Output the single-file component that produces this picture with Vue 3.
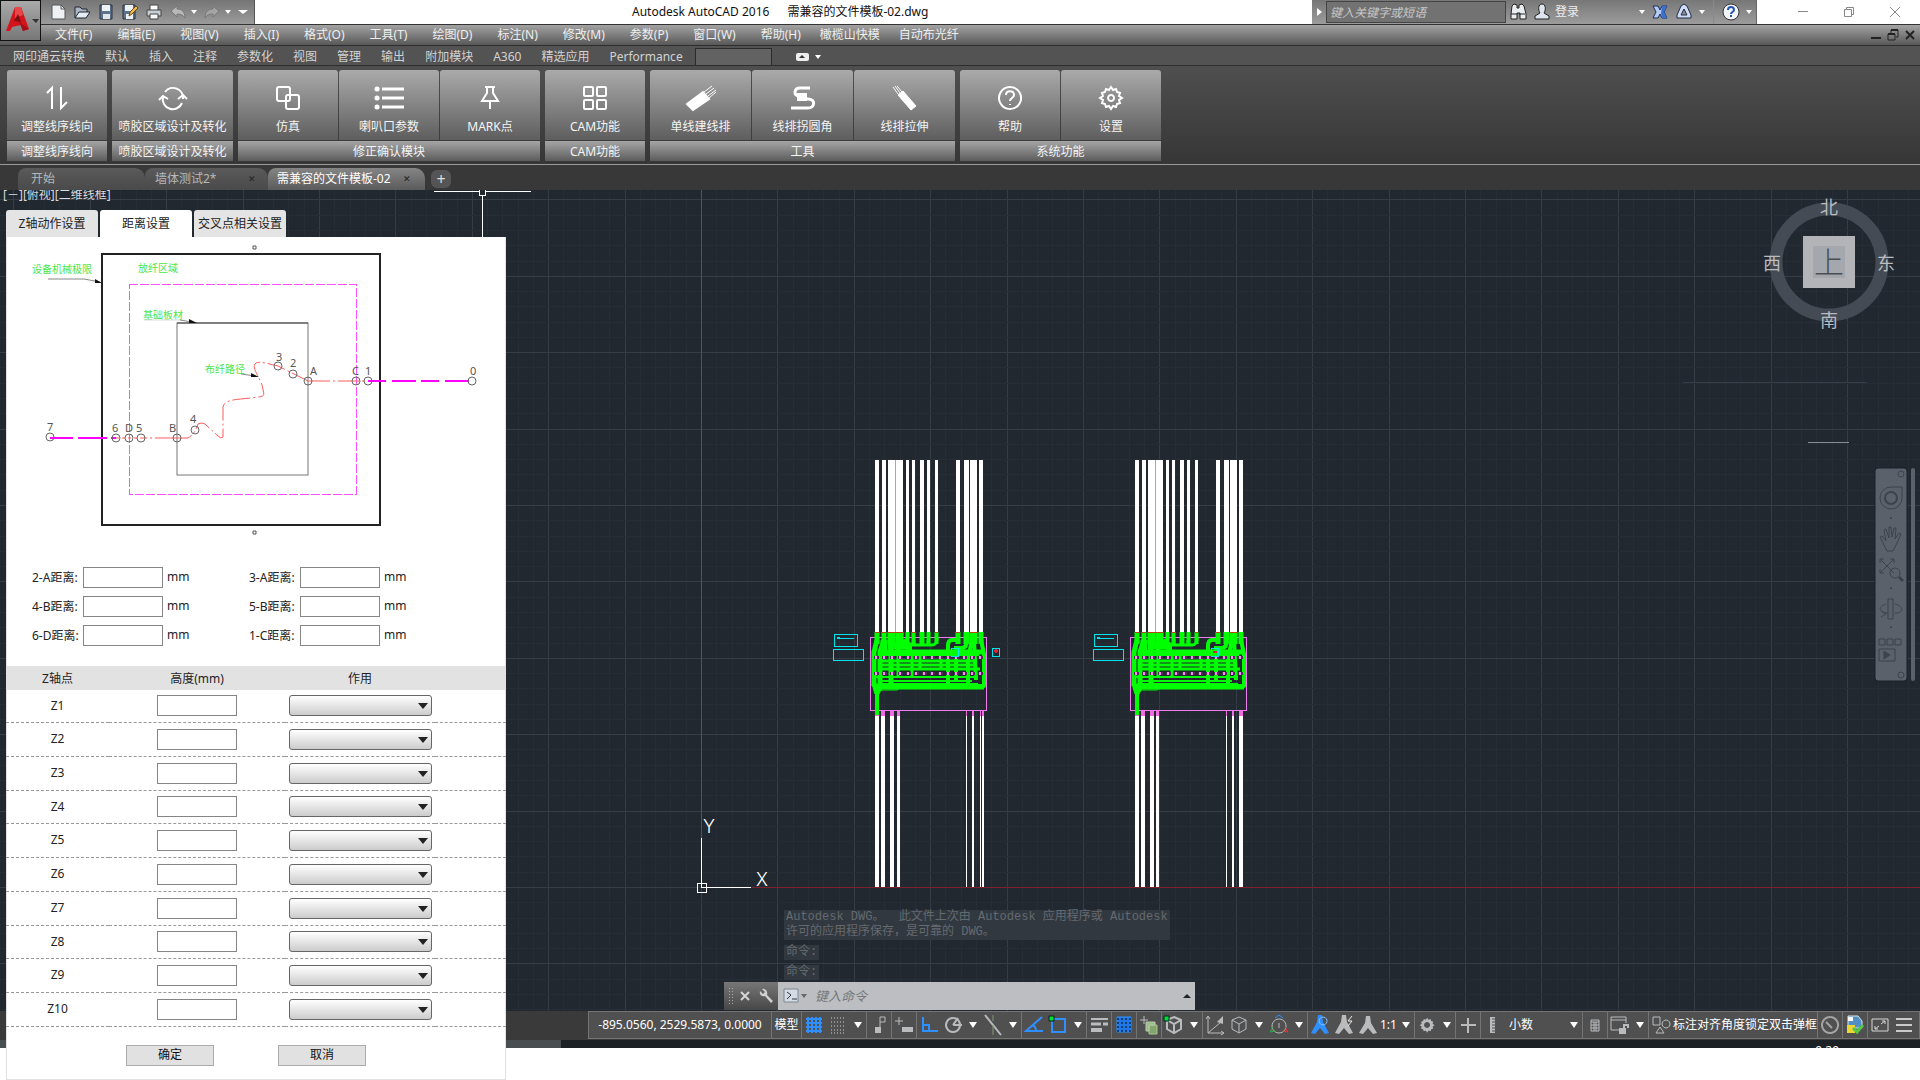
<script setup>
import { ref } from 'vue'

const quick = [
  { n: '新建', p: [{ d: 'M2 1h9l4 4v10H2z', f: '#eef1f4', s: '#555' }, { d: 'M11 1v4h4', f: 'none', s: '#555' }] },
  { n: '打开', p: [{ d: 'M1 14V3h5l2 2h5v3', f: '#aab6c6', s: '#20262e' }, { d: 'M1 14l4-6h11l-4 6z', f: '#e6edf5', s: '#20262e' }] },
  { n: '保存', p: [{ d: 'M2 1h12v14H2z', f: '#5d728c', s: '#26323f' }, { d: 'M4 1h8v6H4z', f: '#eef1f4', s: 'none' }, { d: 'M5 10h7v5H5z', f: '#dfe5ea', s: 'none' }] },
  { n: '另存为', p: [{ d: 'M1 1h12v14H1z', f: '#5d728c', s: '#26323f' }, { d: 'M3 1h8v6H3zM4 10h7v5H4z', f: '#eef1f4', s: 'none' }, { d: 'M7 12l1-4 6-6 2 2-6 6z', f: '#f0b94a', s: '#6b4a17' }] },
  { n: '打印', p: [{ d: 'M4 1h8v6H4z', f: '#fff', s: '#444' }, { d: 'M1 6h14v6H1z', f: '#c9ced3', s: '#444' }, { d: 'M4 10h8v5H4z', f: '#f7f7f7', s: '#444' }] },
  { n: '放弃', w: 1, p: [{ d: 'M1 7l6-5v3c5 0 8 3 8 9-2-3-4-4-8-4v3z', f: '#b9b9b9', s: '#777' }] },
  { n: '重做', w: 1, p: [{ d: 'M15 7L9 2v3c-5 0-8 3-8 9 2-3 4-4 8-4v3z', f: '#a4a4a4', s: '#777' }] }
]

const menus = ['文件(F)', '编辑(E)', '视图(V)', '插入(I)', '格式(O)', '工具(T)', '绘图(D)', '标注(N)', '修改(M)', '参数(P)', '窗口(W)', '帮助(H)', '橄榄山快模', '自动布光纤']
const ribbonTabs = ['网印通云转换', '默认', '插入', '注释', '参数化', '视图', '管理', '输出', '附加模块', 'A360', '精选应用', 'Performance']

const gear = 'M12 1l2 3 3-1 1 3 3 1-1 3 3 2-3 2 1 3-3 1-1 3-3-1-2 3-2-3-3 1-1-3-3-1 1-3-3-2 3-2-1-3 3-1 1-3 3 1z'
const panels = [
  { title: '调整线序线向', tools: [{ n: '调整线序线向', p: [{ d: 'M2 7l5-5v21M16 1v21l6-6' }] }] },
  { title: '喷胶区域设计及转化', wide: true, tools: [{ n: '喷胶区域设计及转化', p: [{ d: 'M4 6a10 10 0 0 1 18 7M21 17A10 10 0 0 1 2 11' }, { d: 'M17 13l5-4 4 4M-2 14l4-4 5 3' }] }] },
  { title: '修正确认模块', tools: [
    { n: '仿真', p: [{ d: 'M3 1h9a2 2 0 0 1 2 2v10a2 2 0 0 1-2 2H3a2 2 0 0 1-2-2V3a2 2 0 0 1 2-2zM12 9h9a2 2 0 0 1 2 2v10a2 2 0 0 1-2 2h-9a2 2 0 0 1-2-2V11a2 2 0 0 1 2-2z' }] },
    { n: '喇叭口参数', x: '0 0 30 24', p: [{ d: 'M3 3h0.1M3 12h0.1M3 21h0.1', w: 5 }, { d: 'M8 3h22M8 12h22M8 21h22', w: 3 }] },
    { n: 'MARK点', p: [{ d: 'M7 1h10M9 1v6l-5 8h16l-5-8V1M12 15v8' }] }] },
  { title: 'CAM功能', tools: [{ n: 'CAM功能', p: [{ d: 'M2 1h7q1 0 1 1v7q0 1-1 1H2q-1 0-1-1V2q0-1 1-1zM15 1h7q1 0 1 1v7q0 1-1 1h-7q-1 0-1-1V2q0-1 1-1zM2 14h7q1 0 1 1v7q0 1-1 1H2q-1 0-1-1v-7q0-1 1-1zM15 14h7q1 0 1 1v7q0 1-1 1h-7q-1 0-1-1v-7q0-1 1-1z' }] }] },
  { title: '工具', tools: [
    { n: '单线建线排', p: [{ d: 'M-2 18L14 6l6 7L4 24z', f: '#fff' }, { d: 'M15 6l8-6M17 8l8-6M19 10l8-6M20 12l7-6', w: 1 }] },
    { n: '线排拐圆角', p: [{ d: 'M19 2H9C3 2 2 10 8 10M14 13h3c8 0 7 9 0 9H0', w: 3 }, { d: 'M7 8h8v6H7z', f: '#fff' }] },
    { n: '线排拉伸', p: [{ d: 'M5 9l5-4 13 15-5 4z', f: '#fff', w: 1 }, { d: 'M5 8L0 1M7 7L2 0M9 6L4 0', w: 1 }] }] },
  { title: '系统功能', tools: [
    { n: '帮助', p: [{ d: 'M12 1a11 11 0 1 0 .1 0zM8 9c0-5 8-5 8 0 0 3-4 3-4 6M12 18v1' }] },
    { n: '设置', p: [{ d: gear }, { d: 'M12 9a3 3 0 1 0 .1 0z' }] }] }
]

const docs = [{ n: '开始' }, { n: '墙体测试2*', x: 1 }, { n: '需兼容的文件模板-02', x: 1, on: 1 }]

const range = (n) => Array.from({ length: n }, (_, i) => i)
const gridX = range(130).map((i) => ({ at: Math.round(701 + (i - 46) * 15.28), major: (i - 46) % 5 === 0 }))
const gridY = range(56).map((i) => ({ at: Math.round(887 + (i - 46) * 15.28), major: (i - 46) % 5 === 0 }))

const topBars = [[875, 4], [882, 4], [888, 7], [896, 7], [906, 3], [912, 3], [920, 4], [927, 3], [935, 3], [956, 4], [964, 5], [970, 7], [979, 4]]
const boards = [
  { dx: 0, marks: [951, 992], low: [[875, 4], [881, 4], [890, 4], [897, 3], [966, 1], [972, 2], [980, 1], [982, 2]] },
  { dx: 260, marks: [951], low: [[875, 4], [881, 4], [890, 4], [896, 3], [966, 1], [972, 2], [979, 4]] }
]
const pads = range(14).map((i) => 877 + i * 8)

const distances = [['2-A距离:', '3-A距离:'], ['4-B距离:', '5-B距离:'], ['6-D距离:', '1-C距离:']]
const dialogTabs = ['Z轴动作设置', '距离设置', '交叉点相关设置']
const activeTab = ref(1)
const nodes = [[472, 381, '0', 470, 375], [368, 381, '1', 365, 375], [356, 381, 'C', 352, 375], [308, 381, 'A', 310, 375], [293, 374, '2', 290, 367], [278, 366, '3', 276, 361], [195, 430, '4', 190, 423], [177, 438, 'B', 169, 432], [141, 438, '5', 136, 432], [129, 438, 'D', 125, 432], [116, 438, '6', 112, 432], [50, 437, '7', 47, 431]]

const G = '#b9bbbd'
const B = '#2f8fff'
const star = 'M10 2h4l1 7 6 11-4 1-5-6-5 6-4-1 6-11z'
const cube = 'M12 4l7 3v9l-7 4-7-4V7zM5 7l7 4 7-4M12 11v9'
const I = {
  grid: [{ d: 'M6 4v16M10 4v16M14 4v16M18 4v16M4 6h16M4 10h16M4 14h16M4 18h16', s: B, w: 2 }],
  dots: [{ d: 'M5 5h15M5 9h15M5 13h15M5 17h15M5 20h15', s: '#d0d0d0', w: 1, a: '1 2' }],
  infer: [{ d: 'M13 4h5v5h-5zM13 9v6', s: G, w: 1 }, { d: 'M8 14h6v6H8z', f: G }],
  dyn: [{ d: 'M3 8h8M7 4v8', s: G, w: 1 }, { d: 'M10 14h11v5H10z', f: G }],
  ortho: [{ d: 'M6 4v14h15M6 12h6v6', s: B, w: 2 }],
  polar: [{ d: 'M12 5a7 7 0 1 0 .1 0M12 12h9M12 12l5-7', s: G, w: 2 }],
  iso: [{ d: 'M4 2l16 20', s: G, w: 2 }, { d: 'M12 12v10M12 2v6', s: '#7f9a70', w: 1 }],
  track: [{ d: 'M20 4L4 18h17M10 12c3 1 4 3 4 6', s: B, w: 2 }],
  snap: [{ d: 'M6 6h13v13H6z', s: B, w: 2 }, { d: 'M3 3h5v5H3z', f: '#0d3', s: '#022', w: 1 }],
  lw: [{ d: 'M4 6h17', s: G, w: 2 }, { d: 'M4 11h10M16 11h5', s: G, w: 3 }, { d: 'M4 17h11', s: G, w: 4 }],
  trans: [{ d: 'M5 4h14v15H5z', f: '#1e78e6', s: B, w: 1 }, { d: 'M5 6h14M5 10h14M5 14h14M5 18h14', s: '#123e75', w: 2, a: '2 2' }],
  cycle: [{ d: 'M3 7h8M7 3v8', s: G, w: 1 }, { d: 'M12 12h8v9h-8z', f: '#83a66d', s: '#a5c38f', w: 1 }, { d: 'M9 9h9v3h-6v6H9z', f: '#9bbd85', s: '#b8c9ae', w: 1 }],
  osnap3: [{ d: cube, s: G, w: 2 }, { d: 'M2 3h5v5H2z', f: '#0d3', s: '#022', w: 1 }],
  ucs: [{ d: 'M5 4v16h16M5 20L18 9M3 6l2-3 2 3M18 18l3 2-3 2', s: G, w: 1 }, { d: 'M14 9l6-6v8z', f: G }],
  filter: [{ d: cube, s: G, w: 1 }],
  gizmo: [{ d: 'M12 6a7 7 0 1 0 .1 0M12 10v5', s: G, w: 1 }, { d: 'M8 5l4-3 4 3', s: B, w: 1 }, { d: 'M18 14l3 5-5-1', s: '#e33', w: 1 }, { d: 'M6 14l-3 5 5-1', s: '#3a4', w: 1 }],
  ann: [{ d: star, f: B }, { d: 'M15 4a4 4 0 1 0 .1 0', s: '#80bfff', w: 1 }],
  ann2: [{ d: star, f: G }, { d: 'M20 3l-4 5h4l-4 5', s: '#eee', w: 1 }],
  ann3: [{ d: 'M10 3h4l1 7 6 10-4 1-5-6-5 6-4-1 6-10z', f: G }],
  gear: [{ d: gear, f: G, t: 'translate(4 4) scale(.68)' }, { d: 'M12 9a3 3 0 1 0 .1 0z', f: '#505050' }],
  plus: [{ d: 'M12 5v15M5 12h15', s: G, w: 2 }],
  rule: [{ d: 'M9 4h5v16H9z', f: G }, { d: 'M11 6h3M11 9h3M11 12h3M11 15h3M11 18h3', s: '#505050', w: 1 }],
  calc: [{ d: 'M8 7h8v11H8zM8 9h8M11 9v9M13 9v9M8 12h8M8 15h8', s: G, w: 1 }],
  lock: [{ d: 'M11 17H3V4h15v6M3 7h15', s: G, w: 1 }, { d: 'M11 15h7v6h-7z', f: G }, { d: 'M16 15v-3h4v3', s: G, w: 2 }],
  shapes: [{ d: 'M4 4h7v8H4zM17 7a4 4 0 1 0 .1 0M11 14l4 6H7z', s: G, w: 1 }],
  gauge: [{ d: 'M12 4a8 8 0 1 0 .1 0M8 9l6 6', s: '#a4a4a4', w: 2 }],
  colour: [{ d: 'M5 3h10l4 5v7H5z', f: '#4f8fc6', s: '#dbe7ef', w: 1 }, { d: 'M4 12h8v8H4z', f: '#efd534' }, { d: 'M10 15l4 4 6-7', s: '#55c544', w: 3 }, { d: 'M5 4h5v4H5z', f: '#fff' }],
  full: [{ d: 'M4 6h16v12H4zM13 11l4-3M17 11V8h-3M11 13l-4 3M7 13v3h3', s: '#d6d6d6', w: 1 }],
  more: [{ d: 'M4 6h16M4 12h16M4 18h16', s: '#c9c9c9', w: 2 }]
}
const statusA = [['grid', 'dots', '▾'], ['infer'], ['dyn'], ['ortho', 'polar', '▾', 'iso', '▾'], ['track', 'snap', '▾'], ['lw'], ['trans'], ['cycle'], ['osnap3', '▾'], ['ucs', 'filter', '▾', 'gizmo', '▾'], ['ann', 'ann2', 'ann3', '1:1', '▾'], ['gear', '▾'], ['plus']]
const statusB = [['calc'], ['lock', '▾'], ['shapes', '标注对齐角度锁定双击弹框'], ['gauge'], ['colour'], ['full', 'more']]
</script>

<template>
  <div class="app">
    <header class="title">
      <button class="logo" aria-label="应用程序菜单">
        <svg width="40" height="40" viewBox="0 0 40 40"><path d="M5 30L14 6h6l8 22-6 2-2-6-9 2-2 4z" fill="#d3151b" /><path d="M14 6h6l2 8-8 3z" fill="#e8474a" /><path d="M13 20l4-7 3 8z" fill="#7a0d10" /><path d="M14 17l8 7 6 4-6 2-3-7z" fill="#a50f14" /><path d="M31 18h7l-3 4z" fill="#333" /></svg>
      </button>
      <div class="quick">
        <template v-for="q in quick" :key="q.n">
          <button class="qbtn" :aria-label="q.n"><svg width="16" height="16" viewBox="0 0 16 16"><path v-for="(p, i) in q.p" :key="i" :d="p.d" :fill="p.f" :stroke="p.s" /></svg></button>
          <i v-if="q.w" class="caret gap"></i>
        </template>
        <i class="caret over"></i>
      </div>
      <h1><span>Autodesk AutoCAD 2016</span><span>需兼容的文件模板-02.dwg</span></h1>
      <div class="search">
        <button class="play" aria-label="展开"><i></i></button>
        <input type="text" placeholder="键入关键字或短语" aria-label="搜索" />
        <button class="sbtn" aria-label="查找"><svg width="18" height="18" viewBox="0 0 18 18"><path d="M3 3l2-2 3 1v3h2V2l3-1 2 2 2 8v5h-6v-6H8v6H2v-5z" fill="#e9edf1" stroke="#222" /><path d="M2 11h6M10 11h6" stroke="#222" /></svg></button>
        <button class="sbtn login"><svg width="18" height="18" viewBox="0 0 18 18"><path d="M9 1c4 0 4 6 2 9l5 3v3H2v-3l5-3C5 7 5 1 9 1z" fill="#dfe5ee" stroke="#222" /></svg>登录</button>
        <i class="caret push"></i>
        <button class="sbtn" aria-label="Exchange"><svg width="18" height="18" viewBox="0 0 18 18"><path d="M2 3h5l2 4 2-4h5l-3 6 3 6h-5l-2-4-2 4H2l3-6z" fill="#b5cdf3" stroke="#1b2f5c" /><path d="M11 3h5l-3 6 3 6h-5l-1-5z" fill="#3a6fd0" /></svg></button>
        <button class="sbtn" aria-label="A360"><svg width="18" height="18" viewBox="0 0 18 18"><path d="M9 1l3 2 4 9v3H2v-3l4-9zM9 6l-3 6h6z" fill="#cfdcf3" stroke="#1f2d48" fill-rule="evenodd" /></svg></button>
        <i class="caret"></i><i class="bar"></i>
        <button class="sbtn" aria-label="帮助"><svg width="18" height="18" viewBox="0 0 18 18"><circle cx="9" cy="9" r="8" fill="#f2f5fa" stroke="#333" /><path d="M6 7c0-4 6-4 6 0 0 2-3 2-3 4M9 12v2" fill="none" stroke="#2455b0" stroke-width="2" /></svg></button>
        <i class="caret"></i>
      </div>
      <div class="win">
        <button aria-label="最小化"><svg width="12" height="12"><path d="M1 5.500h10" stroke="#888" /></svg></button>
        <button aria-label="还原"><svg width="12" height="12"><path d="M1.500 3.500h7v7h-7zM3.500 3V1.500h7v7H9" stroke="#888" fill="none" /></svg></button>
        <button aria-label="关闭"><svg width="12" height="12"><path d="M1 1l10 10M11 1L1 11" stroke="#888" /></svg></button>
      </div>
    </header>

    <nav class="menu">
      <a v-for="m in menus" :key="m" href="#" :class="{ plug: m.length === 5 && m[2] !== '(' }">{{ m }}</a>
      <div class="docwin">
        <button aria-label="最小化文档"><svg width="12" height="12"><path d="M1 9h10" stroke="#222" stroke-width="2" /></svg></button>
        <button aria-label="还原文档"><svg width="12" height="12"><path d="M1 5h7v6H1zM4 4V1h7v7H9" stroke="#222" stroke-width="1" fill="none" /><path d="M1 5h7M4 1h7" stroke="#222" stroke-width="2" /></svg></button>
        <button aria-label="关闭文档"><svg width="12" height="12"><path d="M2 2l8 8M10 2l-8 8" stroke="#222" stroke-width="2" /></svg></button>
      </div>
    </nav>

    <nav class="rtabs">
      <a v-for="t in ribbonTabs" :key="t" href="#">{{ t }}</a>
      <button class="blank" aria-label="当前选项卡"></button>
      <button class="fold" aria-label="最小化功能区"><i></i></button><i class="caret"></i>
    </nav>

    <section class="ribbon">
      <div v-for="p in panels" :key="p.title" class="panel">
        <div class="tools">
          <button v-for="t in p.tools" :key="t.n" class="tool" :class="{ wide: p.wide }">
            <svg :width="t.x ? 30 : 24" height="24" :viewBox="t.x || '0 0 24 24'" overflow="visible"><path v-for="(q, i) in t.p" :key="i" :d="q.d" :fill="q.f || 'none'" stroke="#fff" :stroke-width="q.w || 2" :stroke-linecap="q.w === 5 ? 'round' : 'butt'" /></svg>
            <span>{{ t.n }}</span>
          </button>
        </div>
        <div class="ptitle">{{ p.title }}</div>
      </div>
    </section>

    <div class="docs">
      <div v-for="d in docs" :key="d.n" class="doc" :class="{ on: d.on, mid: d.x && !d.on }">
        <span>{{ d.n }}</span><button v-if="d.x" aria-label="关闭标签">✕</button>
      </div>
      <button class="add" aria-label="新建标签">+</button>
    </div>

    <main class="canvas">
      <svg class="draw" width="100%" height="100%" font-family="'Noto Sans','Noto Sans CJK SC',sans-serif">
        <g transform="translate(0 -190)" shape-rendering="crispEdges">
          <path v-for="g in gridX" :key="'x' + g.at" :d="`M${g.at} 190V1400`" :stroke="g.major ? '#363d47' : '#262d36'" />
          <path v-for="g in gridY" :key="'y' + g.at" :d="`M0 ${g.at}H4000`" :stroke="g.major ? '#363d47' : '#262d36'" />
          <path d="M1683 382h184" stroke="#363d47" /><path d="M1808 442h41" stroke="#8b8f95" />
          <path d="M701 190V838" stroke="#1f7532" />
          <path d="M751 887H4000" stroke="#7d1f2c" />
          <g v-for="b in boards" :key="b.dx" :transform="`translate(${b.dx} 0)`">
            <rect x="888" y="460" width="15" height="172" fill="#aaa" />
            <rect v-for="r in topBars" :key="r[0]" :x="r[0]" y="460" :width="r[1]" height="173" fill="#fff" />
            <rect v-for="r in b.low" :key="r[0]" :x="r[0]" y="714" :width="r[1]" height="173" fill="#fff" />
            <rect v-for="r in b.low" :key="'m' + r[0]" :x="r[0]" y="711" :width="r[1]" height="5" fill="#f06be0" />
            <rect x="870" y="637" width="116" height="73" fill="none" stroke="#ef7df0" />
            <g fill="none" stroke="#0f0" stroke-linejoin="round" shape-rendering="auto">
              <path v-for="r in topBars" :key="r[0]" :d="`M${r[0] + r[1] / 2} 632v12`" :stroke-width="r[1] + 1" />
              <path d="M877 640l-3 12v34M884 640l-4 12v32M891 640v44M898 640v12h84M903 640l8 12" stroke-width="5" />
              <path d="M884 640v16M888 646h24" stroke-width="7" />
              <path d="M907 638q0 7 5 7h20q5 0 5-7M914 640v5M922 640v4M928 640v4" stroke-width="3" />
              <path d="M958 640h-6q-4 0-4 6v38M967 640q0 8-6 8h-7M956 648v32M972 640l-4 18v26M974 640l2 40M981 640l3 14v32h-8" stroke-width="4" />
              <path d="M879 653h100" stroke-width="6" />
              <path d="M880 661h96M880 665h96M880 669h100" stroke-width="3" />
              <path d="M876 677h102M880 681h92M882 684h96" stroke-width="2" />
              <path d="M876 687h108" stroke-width="5" />
              <path d="M898 652v26M912 652v26M920 655v14M941 655v14" stroke-width="3" />
              <path d="M880 690h17l6-4" stroke-width="1" />
              <path d="M872 684l3 10h4l5-10z" fill="#0f0" />
              <path d="M877 690v25" stroke-width="4" />
            </g>
            <template v-for="x in pads" :key="x">
              <rect :x="x - 3" y="656" width="5" height="3" fill="#4a2f52" /><rect :x="x - 2" y="656" width="2" height="3" fill="#f58df0" />
              <rect :x="x - 3" y="672" width="5" height="3" fill="#4a2f52" /><rect :x="x - 2" y="672" width="2" height="3" fill="#f58df0" />
            </template>
            <path d="M875 632h4M882 632h4M888 632h15M912 632h3M935 632h3M956 632h4M970 632h7" stroke="#b04a10" />
            <g fill="none" stroke="#00e5ee"><path d="M834 634h23v12h-23zM833 649h30v11h-30zM837 638h17" stroke-width="1" /><path d="M837 638h3" stroke-width="2" />
              <rect v-for="m in b.marks" :key="m" :x="m" y="648" width="7" height="8" /></g>
            <path v-if="b.marks[1]" d="M994 651h4M996 649v4" stroke="#e0203a" stroke-width="2" />
            <path v-else d="M953 652h4" stroke="#e0203a" stroke-width="2" />
          </g>
          <path d="M701 838V887H751M697 883h9v9h-9z" fill="none" stroke="#fff" />
          <path d="M434 191H531M482 195V260" stroke="#fff" /><path d="M479 188h6v7h-6z" fill="#212830" stroke="#fff" />
        </g>
        <g transform="translate(0 -190)" fill="#fff">
          <text x="3" y="199" font-size="12" fill="#d8dadd">[－][俯视][二维线框]</text>
          <text x="703" y="833" font-size="18" font-family="Inter, 'Open Sans', sans-serif" font-weight="300">Y</text>
          <text x="756" y="886" font-size="18" font-family="Inter, 'Open Sans', sans-serif" font-weight="300">X</text>
        </g>
      </svg>

      <svg class="cube" width="140" height="150" viewBox="0 0 140 150" font-family="'Noto Sans CJK SC',sans-serif" text-anchor="middle">
        <circle cx="70" cy="72" r="53" fill="none" stroke="#454b54" stroke-width="13" />
        <path d="M44 46h52v52H44z" fill="#b2b4b7" /><path d="M54 56h32v32H54z" fill="#a4a8ae" />
        <text x="70" y="83" font-size="30" font-weight="300" fill="#4b4e53">上</text>
        <g font-size="18" fill="#b9bcc0"><text x="70" y="24">北</text><text x="70" y="137">南</text><text x="13" y="80">西</text><text x="127" y="80">东</text></g>
      </svg>

      <svg class="navbar" width="42" height="216" viewBox="0 0 42 216" fill="none" stroke="#3d424b">
        <rect x="1" y="1" width="32" height="213" rx="3" fill="#5b616b" stroke="#1b2027" /><rect x="37" y="1" width="4" height="213" rx="2" fill="#5b616b" stroke="none" />
        <circle cx="27" cy="7" r="3" /><circle cx="27" cy="208" r="3" />
        <path d="M17 20h11v11a11 11 0 1 1-11-11z" /><circle cx="17" cy="31" r="6" stroke-width="2" />
        <path d="M10 78l-4-8 2-1 4 5-2-11 2-1 3 9V60h2l1 10 2-9h2l-1 11 4-6 2 1-4 9-4 8h-6z" />
        <path d="M6 92l14 14M20 92L6 106M6 96v-4h4M16 92h4v4M6 102v4h4" stroke-width="1" /><circle cx="21" cy="106" r="5" /><path d="M25 110l4 4" stroke-width="3" />
        <path d="M14 132h5v20h-5zM12 137c-8 3-8 8 2 9M21 137c10 3 8 9 0 9M7 144l5 3-5 3" />
        <path d="M5 172h6v6H5zM13 172h6v6h-6zM21 172h6v6h-6zM5 182h16v12H5z" /><path d="M10 184v8l6-4z" fill="#3d424b" />
        <path d="M16 51h2l-1 1zM16 121h2l-1 1zM16 160h2l-1 1z" fill="#333" />
      </svg>

      <div class="command">
        <p class="log">Autodesk DWG。&nbsp; 此文件上次由 Autodesk 应用程序或 Autodesk<br />许可的应用程序保存，是可靠的 DWG。</p>
        <p class="log">命令:</p>
        <p class="log">命令:</p>
        <div class="cmdline">
          <span class="grip"></span>
          <button aria-label="关闭"><svg width="12" height="12"><path d="M2 2l8 8M10 2l-8 8" stroke="#d7d7d7" stroke-width="2" /></svg></button>
          <button aria-label="自定义"><svg width="16" height="16" viewBox="0 0 16 16"><path d="M3 1l3 3-2 2-3-3c-1 4 2 6 5 5l6 7 2-2-6-6c1-3-1-7-5-6z" fill="#d0d0d0" /></svg></button>
          <label><svg width="24" height="16" viewBox="0 0 24 16"><path d="M1 1h14v13H1z" fill="#d5dbe3" stroke="#7d8793" /><path d="M4 4l4 3-4 4M9 11h5" fill="none" stroke="#334" /><path d="M18 6h6l-3 4z" fill="#666" /></svg>
            <input type="text" placeholder="键入命令" aria-label="命令" /><i></i></label>
        </div>
      </div>
    </main>

    <footer class="status">
      <div class="cell coords">-895.0560, 2529.5873, 0.0000</div>
      <button class="cell model">模型</button>
      <template v-for="(half, h) in [statusA, statusB]" :key="h">
        <div v-if="h" class="cell unit">
          <button class="slot" aria-label="单位"><svg width="24" height="24"><path v-for="(p, k) in I.rule" :key="k" :d="p.d" :fill="p.f || 'none'" :stroke="p.s || 'none'" :stroke-width="p.w" /></svg></button>
          <span>小数</span><i class="drop"></i>
        </div>
        <div v-for="(c, ci) in half" :key="h + '-' + ci" class="cell">
          <template v-for="(s, si) in c" :key="si">
            <i v-if="s === '▾'" class="drop"></i>
            <button v-else-if="I[s]" class="slot" :aria-label="s"><svg width="24" height="24" viewBox="0 0 24 24"><path v-for="(p, k) in I[s]" :key="k" :d="p.d" :fill="p.f || 'none'" :stroke="p.s || 'none'" :stroke-width="p.w" :stroke-dasharray="p.a" :transform="p.t" /></svg></button>
            <span v-else>{{ s }}</span>
          </template>
        </div>
      </template>
    </footer>
    <div class="task"><span class="lit"></span><span class="clock">9:29</span></div>

    <section class="dialog">
      <div class="dtabs" role="tablist">
        <button v-for="(t, i) in dialogTabs" :key="t" role="tab" :class="{ on: activeTab === i }" @click="activeTab = i">{{ t }}</button>
      </div>
      <form class="body" @submit.prevent>
        <svg class="diagram" width="500" height="308" viewBox="6 237 500 308" fill="none" font-family="'Noto Sans','Noto Sans CJK SC',sans-serif">
          <path d="M253 246h3v3h-3zM253 531h3v3h-3z" stroke="#555" />
          <rect x="102" y="254" width="278" height="271" stroke="#222" stroke-width="2" />
          <path d="M129 284H356V494H129z" stroke="#ff4dff" stroke-dasharray="9 2" shape-rendering="crispEdges" />
          <rect x="177" y="323" width="131" height="152" stroke="#777" /><path d="M177 323h131" stroke="#444" />
          <g fill="#49e649" font-size="10"><text x="32" y="273">设备机械极限</text><text x="138" y="272">放纤区域</text><text x="143" y="319">基础板材</text><text x="205" y="373">布纤路径</text></g>
          <path d="M48 279h36l16 3M241 374l14 2M180 320l12 2" stroke="#888" /><path d="M144 320h36" stroke="#ddd" />
          <path d="M102 283l-7-4v4zM197 323l-8-4v4zM259 377l-8-4v4z" fill="#111" />
          <g stroke="#ff5a5a"><path d="M308 381l-30-15c-9-2-18-5-22-3-5 4 2 11 6 22 2 10 4 11-4 12-18 3-33 1-35 10v30q-2 2-5-1l-13-12q-4-2-7 0-3 10-10 14h-11" stroke-dasharray="18 3 2 3" /><path d="M308 381h48M177 438h-36" stroke-dasharray="22 3 2 3" /><path d="M116 438h25M356 381h12" stroke-dasharray="3 3" /></g>
          <g stroke="#f0f" stroke-width="2"><path d="M368 381h104" stroke-dasharray="18 6 24 5" /><path d="M50 438h66" stroke-dasharray="23 5 29 4" /></g>
          <g v-for="n in nodes" :key="n[2]"><circle :cx="n[0]" :cy="n[1]" r="4" stroke="#666" /><text :x="n[3]" :y="n[4]" font-size="11" fill="#555">{{ n[2] }}</text></g>
        </svg>
        <div class="fields">
          <template v-for="row in distances" :key="row[0]">
            <div v-for="l in row" :key="l" class="field"><label :for="l">{{ l }}</label><input :id="l" type="text" /><span>mm</span></div>
          </template>
        </div>
        <table>
          <thead><tr><th>Z轴点</th><th>高度(mm)</th><th>作用</th><th class="rest"></th></tr></thead>
          <tbody>
            <tr v-for="z in 10" :key="z">
              <td>Z{{ z }}</td>
              <td><input type="text" :aria-label="'Z' + z + '高度'" /></td>
              <td><div class="pick"><select :aria-label="'Z' + z + '作用'"><option></option></select></div></td>
              <td></td>
            </tr>
          </tbody>
        </table>
        <div class="actions"><button type="submit">确定</button><button type="button">取消</button></div>
      </form>
    </section>
  </div>
</template>

<style>
body { background: #fff; }
</style>

<style scoped>
* { box-sizing: border-box; }
button { padding: 0; border: 0; background: none; color: inherit; font: inherit; }
input, select { font: inherit; border-radius: 0; }
a { color: inherit; text-decoration: none; }
.app { position: relative; display: flex; flex-direction: column; height: 100vh; padding-bottom: 32px; overflow: hidden; font: 12px/16px 'Noto Sans', 'Noto Sans CJK SC', sans-serif; background: #fff; color: #eee; }
.title { display: flex; height: 25px; border-bottom: 1px solid #333; flex: none; position: relative; }
.logo { position: absolute; left: 0; top: 0; width: 41px; height: 41px; border: 1px solid #111; background: linear-gradient(#aaa, #777); z-index: 2; }
.logo svg { display: block; }
.quick { display: flex; align-items: center; width: 255px; padding-left: 50px; gap: 8px; background: linear-gradient(#757575, #9b9b9b); border-right: 1px solid #555; }
.qbtn { height: 16px; width: 16px; }
.qbtn svg, .sbtn svg { display: block; }
.caret { width: 0; height: 0; border: 3px solid transparent; border-top: 4px solid #fff; border-bottom: 0; flex: none; }
.caret.gap { margin: 0 -1px 0 -3px; }
.caret.over { border-width: 4px 5px 0; }
h1 { flex: 1; display: flex; gap: 18px; margin: 0; font-size: 12px; line-height: 24px; font-weight: 400; color: #111; padding-left: 377px; white-space: nowrap; }
.search { display: flex; align-items: center; width: 445px; background: linear-gradient(#777, #9c9c9c); border-right: 1px solid #666; gap: 6px; }
.play { width: 14px; height: 24px; display: grid; place-items: center; margin-right: -6px; }
.play i { border: 4px solid transparent; border-left: 5px solid #fff; border-right: 0; }
.search input { width: 180px; height: 22px; margin-right: -3px; padding: 0 3px; background: #727272; border: 1px solid #444; color: #ddd; font-style: italic; font-size: 12px; }
input::placeholder { color: #c8c8c8; opacity: 1; }
.sbtn { display: flex; align-items: center; gap: 4px; }
.push { margin-left: 54px; }
.bar { width: 1px; height: 24px; background: #8a8a8a; margin: 0 2px; }
.win { width: 163px; display: flex; justify-content: flex-end; gap: 34px; padding-right: 19px; }
.win svg, .docwin svg { display: block; }
.menu { display: flex; align-items: center; height: 21px; padding-left: 55px; gap: 25px; background: linear-gradient(#a3a3a3, #585858); border-bottom: 1px solid #2e2e2e; flex: none; white-space: nowrap; }
.menu .plug { margin-left: -6px; }
.docwin { display: flex; gap: 5px; margin-left: auto; padding-right: 4px; }
.rtabs { display: flex; align-items: center; height: 20px; padding: 2px 0 0 13px; gap: 20px; background: #535353; border-bottom: 1px solid #2e2e2e; flex: none; color: #d2d2d2; white-space: nowrap; }
.blank { width: 77px; height: 17px; align-self: flex-end; background: #626262; border: 1px solid #2a2a2a; border-bottom: 0; margin-left: -8px; }
.fold { width: 13px; height: 8px; margin-left: 4px; border-radius: 2px; background: #eee; display: grid; place-items: center; }
.fold i { border: 3px solid transparent; border-bottom: 3px solid #333; border-top: 0; }
.fold + .caret { margin-left: -14px; }
.ribbon { display: flex; height: 99px; padding: 4px 7px 0; gap: 5px; background: linear-gradient(#4f4f4f, #363636); border-bottom: 1px solid #999; flex: none; }
.tools { display: flex; gap: 1px; }
.tool { display: flex; flex-direction: column; align-items: center; width: 100px; height: 70px; padding-top: 16px; gap: 8px; border-radius: 3px 3px 0 0; background: linear-gradient(#aaa, #5e5e5e); color: #f4f4f4; white-space: nowrap; }
.tool.wide { width: 121px; }
.panel:nth-child(5) .tool { width: 101px; }
.tool svg { flex: none; }
.tool span { line-height: 18px; }
.ptitle { margin-top: 1px; height: 20px; line-height: 22px; text-align: center; background: linear-gradient(#a6a6a6, #5c5c5c); color: #f4f4f4; }
.docs { display: flex; align-items: flex-end; height: 25px; padding-left: 18px; background: #383838; flex: none; }
.doc { display: flex; align-items: center; justify-content: space-between; width: 127px; height: 22px; padding: 0 10px 0 13px; border-radius: 8px 10px 0 0; background: linear-gradient(#5a5a5a, #4a4a4a); color: #b8b8b8; white-space: nowrap; }
.doc.mid { width: 123px; padding-left: 10px; padding-right: 12px; }
.doc.on { width: 157px; padding-left: 9px; padding-right: 14px; background: linear-gradient(#858585, #5b5b5b); color: #fff; }
.doc button { font-size: 9px; color: #222; }
.add { width: 20px; height: 18px; margin: 0 0 2px 6px; border-radius: 6px; background: #555; color: #ddd; font-size: 16px; line-height: 16px; }
.canvas { position: relative; flex: 1; min-height: 0; background: #212830; overflow: hidden; }
.draw { display: block; }
.cube { position: absolute; top: 0; right: 21px; }
.navbar { position: absolute; right: 4px; top: 277px; }
.command { position: absolute; left: 724px; bottom: 1px; width: 471px; display: flex; flex-direction: column; align-items: flex-start; gap: 5px; }
.log { margin: 0 0 0 60px; padding: 0 2px; font: 12px/15px 'Liberation Mono', 'Noto Sans CJK SC', monospace; background: #32383f; color: #656a70; white-space: pre; }
.cmdline { display: flex; align-items: center; align-self: stretch; height: 28px; margin-top: -3px; background: linear-gradient(#777, #474747); }
.cmdline button { width: 22px; height: 16px; display: grid; place-items: center; }
.grip { width: 6px; height: 18px; margin: 0 0 0 4px; background: radial-gradient(#aaa 1px, transparent 1px) 0 0 / 3px 3px; }
.cmdline label { flex: 1; display: flex; align-items: center; height: 28px; padding: 0 4px 0 5px; background: #bcbec1; }
.cmdline input { flex: 1; min-width: 0; padding: 0 8px; border: 0; background: none; font-style: italic; font-size: 13px; }
.cmdline input::placeholder { color: #74777b; }
.cmdline i { border: 4px solid transparent; border-bottom: 4px solid #222; border-top: 0; }
.status { display: flex; height: 29px; padding-left: 588px; background: #3a3a3a; color: #fff; flex: none; white-space: nowrap; }
.cell { display: flex; align-items: center; height: 28px; border: 1px solid #747474; border-left: 0; background: #505050; }
.cell:last-child { padding-right: 3px; }
.coords { width: 184px; justify-content: center; border-left: 1px solid #747474; }
.model { width: 30px; justify-content: center; }
.slot { width: 24px; height: 24px; display: grid; place-items: center; }
.drop { width: 16px; display: grid; place-items: center; }
.drop::before { content: ''; border: 4px solid transparent; border-top: 6px solid #fff; border-bottom: 0; }
.unit { flex: 1; }
.unit span { flex: 1; padding-left: 4px; }
.cell .slot + span { min-width: 18px; }
.task { height: 8px; display: flex; background: #1b2125; overflow: hidden; flex: none; }
.lit { width: 561px; background: #484d50; }
.clock { margin: 3px 81px 0 auto; color: #fff; }
.dialog { position: absolute; left: 6px; top: 210px; width: 500px; color: #222; font-size: 12px; }
.dtabs { display: flex; gap: 2px; height: 27px; }
.dtabs button { width: 92px; background: #e4e4e4; border-radius: 3px 3px 0 0; white-space: nowrap; }
.dtabs button.on { background: #fff; }
.body { background: #fff; border: 1px solid #e2e2e2; border-top: 0; }
.diagram { display: block; margin-left: -1px; }
.fields { display: grid; grid-template-columns: 217px 217px; row-gap: 8px; padding: 22px 0 20px 25px; }
.field { display: flex; align-items: center; height: 21px; }
.field label { width: 51px; }
.field span { margin-left: 4px; padding-bottom: 2px; }
input { outline: 0; }
.field input, td input { display: block; width: 80px; height: 21px; border: 1px solid #858585; background: #fff; padding: 0 4px; }
table { width: 500px; margin-left: -1px; border-collapse: collapse; table-layout: fixed; text-align: center; }
th { height: 24px; padding: 2px 0 0; font-weight: 400; background: #e2e2e2; width: 103px; }
th:nth-child(2) { width: 176px; }
th:nth-child(3) { width: 150px; }
th.rest { width: 71px; }
td { height: 34px; padding: 0; border-bottom: 1px dashed #999; }
tr:first-child td { height: 32px; }
tr:nth-child(4n) td { height: 33px; }
td input { margin: 0 auto; }
.pick { position: relative; width: 143px; height: 21px; margin: 0 auto; }
.pick::after { content: ''; position: absolute; right: 4px; top: 8px; border: 5px solid transparent; border-top: 6px solid #222; border-bottom: 0; pointer-events: none; }
select { appearance: none; display: block; width: 143px; height: 21px; border: 1px solid #666; border-radius: 3px; background: linear-gradient(#fff, #ccc); }
.actions { display: flex; gap: 64px; padding: 18px 0 13px 119px; }
.actions button { width: 88px; height: 21px; background: #e1e1e1; border: 1px solid #adadad; color: #111; }
</style>
